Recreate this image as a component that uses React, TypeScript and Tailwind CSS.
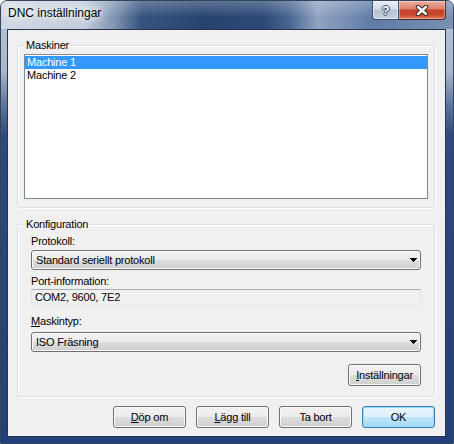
import React from 'react'

const winBtn =
  "h-[22px] w-[73px] rounded-[3px] border border-[#707070] bg-[linear-gradient(180deg,#f2f2f2_0%,#ebebeb_50%,#dddddd_50%,#cfcfcf_100%)] shadow-[inset_0_0_0_1px_#fbfbfb] text-[11px] leading-none text-black"

function Combo({ value }: { value: string }) {
  return (
    <div className="mt-[2px] flex h-[20px] items-center rounded-[3px] border border-[#707070] bg-[linear-gradient(180deg,#f2f2f2_0%,#ebebeb_50%,#dddddd_50%,#cfcfcf_100%)] pl-[4px] pr-[3px] shadow-[inset_0_0_0_1px_#fbfbfb]">
      <span className="flex-1 leading-[13px]">{value}</span>
      <svg width="7" height="4" viewBox="0 0 7 4" shapeRendering="crispEdges">
        <path d="M0 0h7v1h-1v1h-1v1h-1v1h-1v-1h-1v-1h-1v-1h-1z" fill="#000" />
      </svg>
    </div>
  )
}

export default function App() {
  return (
    <div className="flex h-[444px] w-[454px] flex-col overflow-hidden rounded-t-[7px] border border-[#34445c] bg-[linear-gradient(180deg,#b9c5d6_0px,#a9b7cc_70px,#5a739c_105px,#2d4a7c_135px,#22407a_100%)] font-['Liberation_Sans',Arial,sans-serif] text-[11px] tracking-[-0.2px] text-black">
      {/* title bar */}
      <div className="flex h-[28px] shrink-0 items-start bg-[linear-gradient(180deg,rgba(255,255,255,0.25)_0%,rgba(255,255,255,0)_60%),linear-gradient(90deg,#cfd8e3_0%,#c4cedc_18%,#8195b4_25%,#36537f_31%,#26436f_45%,#2b4977_58%,#4a6792_64%,#8fa3c2_70%,#7990b5_76%,#5e7ba7_82%,#7a91b4_100%)]">
        <span className="pl-[7px] pt-[5px] text-[12px] leading-[15px] tracking-normal [text-shadow:0_0_6px_#fff,0_0_10px_#fff,0_0_14px_#fff]">
          DNC inställningar
        </span>
        <div className="ml-auto mr-[7px] flex">
          <button className="flex h-[19px] w-[27px] items-center justify-center rounded-bl-[4px] border border-t-0 border-[#3f4f68] bg-[linear-gradient(180deg,#e9eef5_0%,#d3dce8_45%,#b3c2d6_50%,#c3d0e0_100%)] shadow-[inset_0_0_0_1px_rgba(255,255,255,0.5)]">
            <span className="text-[13px] font-bold leading-none text-white [text-shadow:-1px_0_#3a4a60,1px_0_#3a4a60,0_-1px_#3a4a60,0_1px_#3a4a60]">
              ?
            </span>
          </button>
          <button className="flex h-[19px] w-[47px] items-center justify-center rounded-br-[4px] border border-l-0 border-t-0 border-[#4a2a24] bg-[linear-gradient(180deg,#eab0a2_0%,#da7e68_45%,#c6422a_50%,#c9472c_75%,#e07a5a_100%)] shadow-[inset_0_0_0_1px_rgba(255,255,255,0.35)]">
            <svg width="14" height="11" viewBox="0 0 14 11">
              <path d="M3 2L11 9M11 2L3 9" stroke="#3b2320" strokeWidth="4.4" strokeLinecap="round" />
              <path d="M3 2L11 9M11 2L3 9" stroke="#fff" strokeWidth="2.4" strokeLinecap="round" />
            </svg>
          </button>
        </div>
      </div>

      {/* client area */}
      <div className="flex-1 pb-[6px] pl-[6px] pr-[7px]">
        <div className="flex h-[408px] flex-col border border-[#28344a] bg-[#f0f0f0]">
          <fieldset className="mx-0 ml-[9px] mr-[10px] mt-[9px] min-w-0 rounded-[3px] border border-[#d5dfe5] px-[6px] pb-[8px] pt-[2px] shadow-[inset_1px_1px_0_#fff,1px_1px_0_#fff]">
            <legend className="ml-[0px] h-[13px] px-[2px] leading-[13px]">Maskiner</legend>
            <div className="h-[145px] border border-[#828790] bg-white pt-[1px]">
              <div className="h-[13px] bg-[#3399ff] pl-[2px] leading-[13px] text-white">Machine 1</div>
              <div className="h-[13px] pl-[2px] leading-[13px]">Machine 2</div>
            </div>
          </fieldset>

          <fieldset className="ml-[9px] mr-[10px] mt-[10px] min-w-0 rounded-[3px] border border-[#d5dfe5] px-[6px] pb-[10px] shadow-[inset_1px_1px_0_#fff,1px_1px_0_#fff]">
            <legend className="h-[13px] px-[2px] leading-[13px]">Konfiguration</legend>
            <div className="flex flex-col px-[7px]">
              <div className="mt-[4px] h-[13px] leading-[13px]">Protokoll:</div>
              <Combo value="Standard seriellt protokoll" />
              <div className="mt-[5px] h-[13px] leading-[13px]">Port-information:</div>
              <div className="mt-[1px] h-[17px] border border-b-[#e3e9ef] border-l-[#e2e3ea] border-r-[#e2e3ea] border-t-[#abadb3] bg-[#f0f0f0] pl-[3px] leading-[15px]">
                COM2, 9600, 7E2
              </div>
              <div className="mt-[9px] h-[13px] leading-[13px]">
                <span className="underline">M</span>askintyp:
              </div>
              <div className="mt-[2px]">
                <Combo value="ISO Fräsning" />
              </div>
              <div className="mt-[12px] flex justify-end">
                <button className={winBtn + ' h-[21px]'}>
                  <span className="underline">I</span>nställningar
                </button>
              </div>
            </div>
          </fieldset>

          <div className="mr-[10px] mt-[9px] flex justify-end gap-[10px]">
            <button className={winBtn}>
              <span className="underline">D</span>öp om
            </button>
            <button className={winBtn}>
              <span className="underline">L</span>ägg till
            </button>
            <button className={winBtn}>Ta bort</button>
            <button className="h-[22px] w-[73px] rounded-[3px] border border-[#3c7fb1] bg-[linear-gradient(180deg,#eaf6fd_0%,#d9f0fc_50%,#bee6fd_50%,#a7d9f5_100%)] text-[11px] leading-none text-black shadow-[inset_0_0_0_1px_#8fdcfb]">
              OK
            </button>
          </div>
        </div>
      </div>
    </div>
  )
}
